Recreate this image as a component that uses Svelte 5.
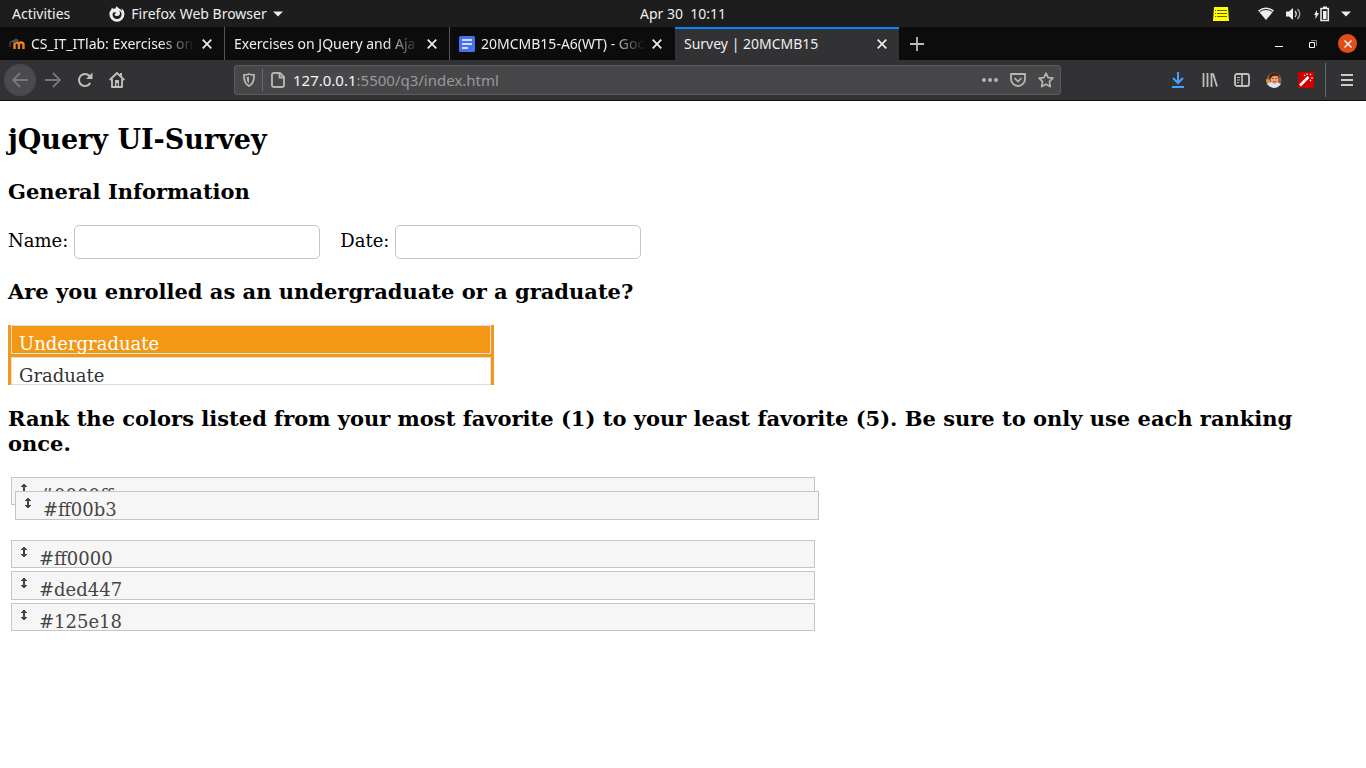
<script>
  const tabs = [
    { title: 'CS_IT_ITlab: Exercises on', icon: 'moodle' },
    { title: 'Exercises on JQuery and Aja' },
    { title: '20MCMB15-A6(WT) - Goo', icon: 'docs' },
    { title: 'Survey | 20MCMB15' }
  ];
  let activeTab = $state(3);
  const levels = ['Undergraduate', 'Graduate'];
  let level = $state('Undergraduate');
  const colors = ['#0000ff', '#ff00b3', '#ff0000', '#ded447', '#125e18'];
  const dragged = '#ff00b3';
  let name = $state('');
  let date = $state('');
</script>

<div class="desktop">
  <div class="system">
    <div class="side">
      <button class="sys activities">Activities</button>
      <button class="sys app">
        <svg width="16" height="16" viewBox="0 0 16 16"><path fill="#eee" d="M7.500.2C6.800 1 6.600 1.800 6.800 2.600 5.800 2.500 5 2.700 4.300 3L2.800 1.600 2.300 3.700C.9 5 .3 6.500.4 8.300a7.500 7.500 0 0 0 15 0c0-2.700-1-4.700-3-6 .6 1 .8 1.800.8 2.600C12 3 9 2.300 7.500.2z"/><path fill="#1d1d1d" d="M4.500 6.200l3 .3-1.800 1.400c-.2 1.400.8 2.200 2.300 2.200 1.900 0 3-1.200 3-3 0-1-.3-1.800-1-2.500 1.700.7 2.600 2 2.600 3.900A4.500 4.500 0 0 1 8 13a4.400 4.400 0 0 1-4.500-4.500c0-.9.400-1.700 1-2.300z"/></svg>
        <span>Firefox Web Browser</span>
        <svg width="10" height="6" viewBox="0 0 10 6"><path fill="#eee" d="M0 .5h10L5 5.500z"/></svg>
      </button>
    </div>
    <span class="clock">Apr 30&nbsp; 10:11</span>
    <div class="side tray">
      <svg class="note" width="16" height="14" viewBox="0 0 16 14"><path fill="#ff0" d="M1 0h14l1 14H0z"/><path stroke="#665f00" stroke-width="1" d="M2 3.500h1m1 0h10M2 6.500h1m1 0h10M2 9.500h1m1 0h10"/></svg>
      <svg class="wifi" width="16" height="14" viewBox="0 0 16 14"><path fill="#eee" d="M0 3.500Q8-2.500 16 3.500L8 13z"/><path d="M1.500 4.700Q8 .3 14.500 4.700" fill="none" stroke="#1d1d1d" stroke-width="1"/></svg>
      <svg class="sound" width="16" height="14" viewBox="0 0 16 14"><path fill="#eee" d="M0 4.500h3L7 1v12L3 9.500H0z"/><g fill="none" stroke="#ddd" stroke-width="1.300"><path d="M9 4q2.500 3 0 6"/><path d="M11.500 2q4.500 5 0 10" stroke="#aaa"/></g></svg>
      <svg class="battery" width="16" height="16" viewBox="0 0 16 16"><path fill="#eee" d="M3 4v3h2L1.500 13V9H0zM9 .5h4V2H9z"/><path fill="none" stroke="#eee" stroke-width="1.500" d="M7 2.500h7.300v12H7z"/><path fill="#eee" d="M9 5h3.500v8H9z"/></svg>
      <svg class="caret" width="10" height="6" viewBox="0 0 10 6"><path fill="#eee" d="M0 .5h10L5 5.500z"/></svg>
    </div>
  </div>

  <div class="tabs">
    {#each tabs as tab, i}
      <div class="tab" class:active={i === activeTab}>
        {#if tab.icon === 'moodle'}
          <svg class="favicon" width="16" height="16" viewBox="0 0 16 16"><path d="M5.500 13V8.500q0-2 2.200-2t2.200 2V13M9.900 9q0-2.500 2.300-2.500T14.500 9V13" fill="none" stroke="#f28017" stroke-width="2.400"/><path fill="#555" d="M.2 6L7 2.700l3 1.300-4 3.200-2-.7z"/><path d="M1 6v5" stroke="#70503a"/></svg>
        {:else if tab.icon === 'docs'}
          <svg class="favicon" width="16" height="16" viewBox="0 0 16 16"><rect width="16" height="16" rx="1.500" fill="#4870f0"/><path d="M3 4h10M3 8h10M3 12h6" stroke="#fff" stroke-width="1.700"/></svg>
        {/if}
        <button class="title" class:faded={i !== activeTab} onclick={() => (activeTab = i)}>{tab.title}</button>
        <button class="close" aria-label="Close tab"><svg width="10" height="10" viewBox="0 0 10 10"><path d="M.7.7l8.600 8.600m0-8.600L.7 9.300" stroke="#eee" stroke-width="1.700"/></svg></button>
      </div>
    {/each}
    <button class="add" aria-label="New tab"><svg width="14" height="14" viewBox="0 0 14 14"><path d="M7 0v14M0 7h14" stroke="#bbb" stroke-width="1.800"/></svg></button>
    <div class="window">
      <button aria-label="Minimise"><svg width="8" height="8" viewBox="0 0 8 8"><path d="M0 6.500h8" stroke="#fff"/></svg></button>
      <button aria-label="Restore"><svg width="8" height="8" viewBox="0 0 8 8"><path d="M.5 2.500h5v5h-5z" fill="none" stroke="#fff"/><path d="M2 .5h5.500V6" fill="none" stroke="#888"/></svg></button>
      <button class="quit" aria-label="Close window"><svg width="8" height="8" viewBox="0 0 8 8"><path d="M.5.5l7 7m0-7l-7 7" stroke="#fff" stroke-width="1.400"/></svg></button>
    </div>
  </div>

  <div class="toolbar">
    <div class="nav">
      <button class="back" aria-label="Back"><svg width="16" height="16" viewBox="0 0 16 16"><path d="M16 8H1M8 1L1 8l7 7" fill="none" stroke="#77777a" stroke-width="1.800"/></svg></button>
      <button aria-label="Forward"><svg width="16" height="16" viewBox="0 0 16 16"><path d="M0 8h15M8 1l7 7-7 7" fill="none" stroke="#77777a" stroke-width="1.800"/></svg></button>
      <button aria-label="Reload"><svg width="16" height="16" viewBox="0 0 16 16"><path d="M13.200 11A6 6 0 1 1 12.500 4L14 6" fill="none" stroke="#bebebe" stroke-width="2"/><path fill="#bebebe" d="M15.500.5V7H9z"/></svg></button>
      <button aria-label="Home"><svg width="16" height="16" viewBox="0 0 16 16"><path d="M.7 8L8 1l7.300 7M3 7v8h10V7" fill="none" stroke="#bebebe" stroke-width="1.900" stroke-linejoin="round"/><path fill="#bebebe" d="M6 8h4v7H8.800v-4H7.500v4H6zM11 1h2v4l-2-1.500z"/></svg></button>
    </div>
    <div class="address">
      <svg width="12" height="14" viewBox="0 0 12 14"><path d="M1 2q3 0 5-1 2 1 5 1 .5 8-5 11Q.5 10 1 2z" fill="none" stroke="#b5b5b5" stroke-width="1.800"/><path d="M6 3.500v7Q3.300 8 3.500 4.200z" fill="#b5b5b5"/></svg>
      <i class="divider"></i>
      <svg width="14" height="16" viewBox="0 0 14 16"><path d="M3 1h6l4 4v8q0 2-2 2H3q-2 0-2-2V3q0-2 2-2zM8.500 1v4.500H13" fill="none" stroke="#b5b5b5" stroke-width="1.900"/></svg>
      <div class="url"><b>127.0.0.1</b>:5500/q3/index.html</div>
      <svg class="dots" width="16" height="4" viewBox="0 0 16 4"><g fill="#b5b5b5"><circle cx="2" cy="2" r="2"/><circle cx="8" cy="2" r="2"/><circle cx="14" cy="2" r="2"/></g></svg>
      <svg class="pocket" width="16" height="14" viewBox="0 0 16 14"><path d="M1 1h14v5a7 7 0 0 1-14 0z" fill="none" stroke="#b5b5b5" stroke-width="1.800" stroke-linejoin="round"/><path d="M4.500 5L8 8.500 11.500 5" fill="none" stroke="#b5b5b5" stroke-width="1.700"/></svg>
      <svg width="16" height="16" viewBox="0 0 16 16"><path d="M8 1.200l2.100 4.400 4.800.6-3.500 3.400.9 5L8 12.200l-4.300 2.400.9-5L1.100 6.200l4.800-.6z" fill="none" stroke="#b5b5b5" stroke-width="1.700" stroke-linejoin="round"/></svg>
    </div>
    <div class="tools">
      <button aria-label="Downloads"><svg width="12" height="16" viewBox="0 0 12 16"><path d="M6 0v11M1 6l5 5 5-5M0 15h12" fill="none" stroke="#45a1ff" stroke-width="2"/></svg></button>
      <button aria-label="Library"><svg width="16" height="14" viewBox="0 0 16 14"><path d="M1.500 0v14M5.500 0v14M9.500 0v14M11 .5l4 13" stroke="#bebebe" stroke-width="1.800"/></svg></button>
      <button aria-label="Sidebar"><svg width="16" height="14" viewBox="0 0 16 14"><rect x="1" y="1" width="14" height="12" rx="2" fill="none" stroke="#bebebe" stroke-width="1.900"/><path d="M8 1v12" stroke="#bebebe" stroke-width="1.600"/><path d="M3 4.500h3M3 7h3M3 9.500h2" stroke="#bebebe"/></svg></button>
      <button aria-label="Account"><svg width="16" height="16" viewBox="0 0 16 16"><circle cx="8" cy="8" r="7.500" fill="#9a5a2c"/><path d="M0 7l4 1v5H2Q0 11 0 7z" fill="#d09a50"/><path d="M1 12l4-2h6l4 2q-3 4-7 4t-7-4z" fill="#dce5f2"/><ellipse cx="8.500" cy="7.500" rx="3.800" ry="4.500" fill="#eda276"/><path d="M3 6Q3 .8 8 .8T14 6l-2-2-5 0-3 3z" fill="#4a2517"/><path d="M6 6.500h1.500m2 0H11M7 9.700h3" stroke="#8e4a2f"/></svg></button>
      <button aria-label="Magic wand"><svg width="16" height="16" viewBox="0 0 16 16"><path fill="#d00000" d="M0 0h16v16H0z"/><path d="M2 13.500L10.500 5" stroke="#fff" stroke-width="2.600"/><path d="M6 3l1 1M9 1.500V3M12 3l1-1M13 6h2M12 8l1 1" stroke="#fff" stroke-width="1.200"/></svg></button>
      <i class="divider tall"></i>
      <button aria-label="Menu"><svg width="12" height="12" viewBox="0 0 12 12"><path d="M0 1h12M0 6h12M0 11h12" stroke="#ccc" stroke-width="2"/></svg></button>
    </div>
  </div>

  <main>
    <h2>jQuery UI-Survey</h2>
    <h3>General Information</h3>
    <div class="fields">
      <label for="name">Name:</label>
      <input id="name" type="text" bind:value={name} />
      <label class="second" for="date">Date:</label>
      <input id="date" type="text" bind:value={date} />
    </div>

    <h3>Are you enrolled as an undergraduate or a graduate?</h3>
    <div class="levels">
      {#each levels as item}
        <button class:selected={item === level} onclick={() => (level = item)}>{item}</button>
      {/each}
    </div>

    <h3>Rank the colors listed from your most favorite (1) to your least favorite (5). Be sure to only use each ranking once.</h3>
    <ul class="ranking">
      {#each colors as color}
        <li class:dragged={color === dragged}>
          <svg width="6" height="10" viewBox="0 0 6 10"><path fill="#444" d="M2 0h2v1h1v1h1v1H4v4h2v1H5v1H4v1H2V9H1V8H0V7h2V3H0V2h1V1h1z"/></svg>
          <span>{color}</span>
        </li>
      {/each}
    </ul>
  </main>
</div>

<style>
  :global(body) { margin: 0; background: #fff; }
  .desktop { font: 14px/18px "Noto Sans", sans-serif; color: #eee; }
  button { font: inherit; color: inherit; background: none; border: 0; padding: 0; display: flex; align-items: center; justify-content: center; }
  svg { display: block; flex: none; }
  .system { display: flex; align-items: center; height: 27px; background: #1d1d1d; }
  .side { flex: 1; display: flex; align-items: center; }
  .activities { margin-left: 12px; }
  .app { margin-left: 39px; gap: 6px; }
  .tray { justify-content: flex-end; }
  .note { margin-right: 29px; }
  .wifi, .sound { margin-right: 12px; }
  .battery { margin-right: 11px; }
  .caret { margin-right: 15px; }
  .tabs { display: flex; height: 33px; background: #0c0c0d; }
  .tab { flex: 0 1 225px; min-width: 0; box-sizing: border-box; display: flex; align-items: center; padding: 0 12px 0 9px; border-right: 1px solid #555; }
  .tab:nth-child(3) { border-color: #0c0c0d; }
  .tab.active { background: #323234; border-right-color: #0c0c0d; box-shadow: inset 0 2px #0a84ff; }
  .favicon { margin-right: 6px; }
  .title { flex: 1; min-width: 0; overflow: hidden; white-space: nowrap; justify-content: flex-start; margin-right: 7px; }
  .faded { mask-image: linear-gradient(to left, transparent, #000 35px); }
  .add { width: 34px; }
  .window { margin-left: auto; display: flex; align-items: center; gap: 26px; padding-right: 9px; }
  .quit { width: 19px; height: 19px; border-radius: 50%; background: #e24e1b; margin-left: -5px; }
  .toolbar { display: flex; align-items: center; height: 40px; background: #323234; border-bottom: 1px solid #0c0c0d; }
  .nav { display: flex; align-items: center; width: 234px; box-sizing: border-box; padding-left: 4px; }
  .nav button { width: 32px; height: 32px; }
  .nav .back { border-radius: 50%; background: #4a4a4c; margin-right: 1px; }
  .address { flex: 1 1 0; min-width: 0; height: 30px; box-sizing: border-box; display: flex; align-items: center; padding: 0 6px 0 8px; border: 1px solid #5c5c5f; border-radius: 3px; background: #474749; }
  .divider { width: 1px; height: 22px; margin: 0 8px 0 7px; background: #69696c; }
  .url { flex: 1; min-width: 0; margin-left: 8px; overflow: hidden; white-space: nowrap; color: #98989b; font-size: 15px; line-height: 22px; }
  .url b { font-weight: 400; color: #f5f5f5; }
  .dots, .pocket { margin-right: 12px; }
  .tools { flex: none; display: flex; align-items: center; margin-left: 101px; padding-right: 3px; }
  .tools button { width: 32px; height: 32px; }
  .tools .tall { height: 34px; margin: 0 5px 0 3px; }
  main { padding: 23px 8px; font: 18px/21px "DejaVu Serif", serif; color: #000; }
  h2 { margin: 0 0 23px; font-size: 27px; line-height: 32px; }
  h3 { margin: 0 0 21px; font-size: 21px; line-height: 25px; }
  .fields { display: flex; align-items: flex-start; flex-wrap: wrap; margin-bottom: 20px; }
  .fields label { padding-top: 5px; margin-right: 6px; }
  .fields .second { margin-left: 20px; }
  .fields input { width: 246px; height: 34px; box-sizing: border-box; padding: 0 8px; border: 1px solid #c8c4c0; border-radius: 5px; background: #fff; font: inherit; }
  .levels { display: grid; grid-auto-rows: minmax(0, 1fr); gap: 3px; width: 486px; max-width: 100%; height: 60px; box-sizing: border-box; padding: 0 3px; margin-bottom: 21px; background: #f39814; }
  .levels button { justify-content: flex-start; align-items: flex-start; padding: 8px 7px 0; border: 1px solid #ddd; background: #fff; color: #333; line-height: 20px; min-height: 0; }
  .levels .selected { background: #f39814; color: #fff; }
  .ranking { display: grid; grid-auto-rows: minmax(0, 1fr); gap: 3px; width: 804px; max-width: 100%; height: 154px; margin: 0; padding: 0 3px; list-style: none; color: #454545; }
  .ranking li { display: flex; align-items: flex-start; padding: 7px 9px 0; border: 1px solid #c5c5c5; background: #f6f6f6; min-height: 0; }
  .ranking svg { margin-top: -1px; }
  .ranking span { margin-left: 12px; height: 19px; }
  .ranking .dragged { position: relative; left: 4px; top: -17px; z-index: 1; }
</style>
